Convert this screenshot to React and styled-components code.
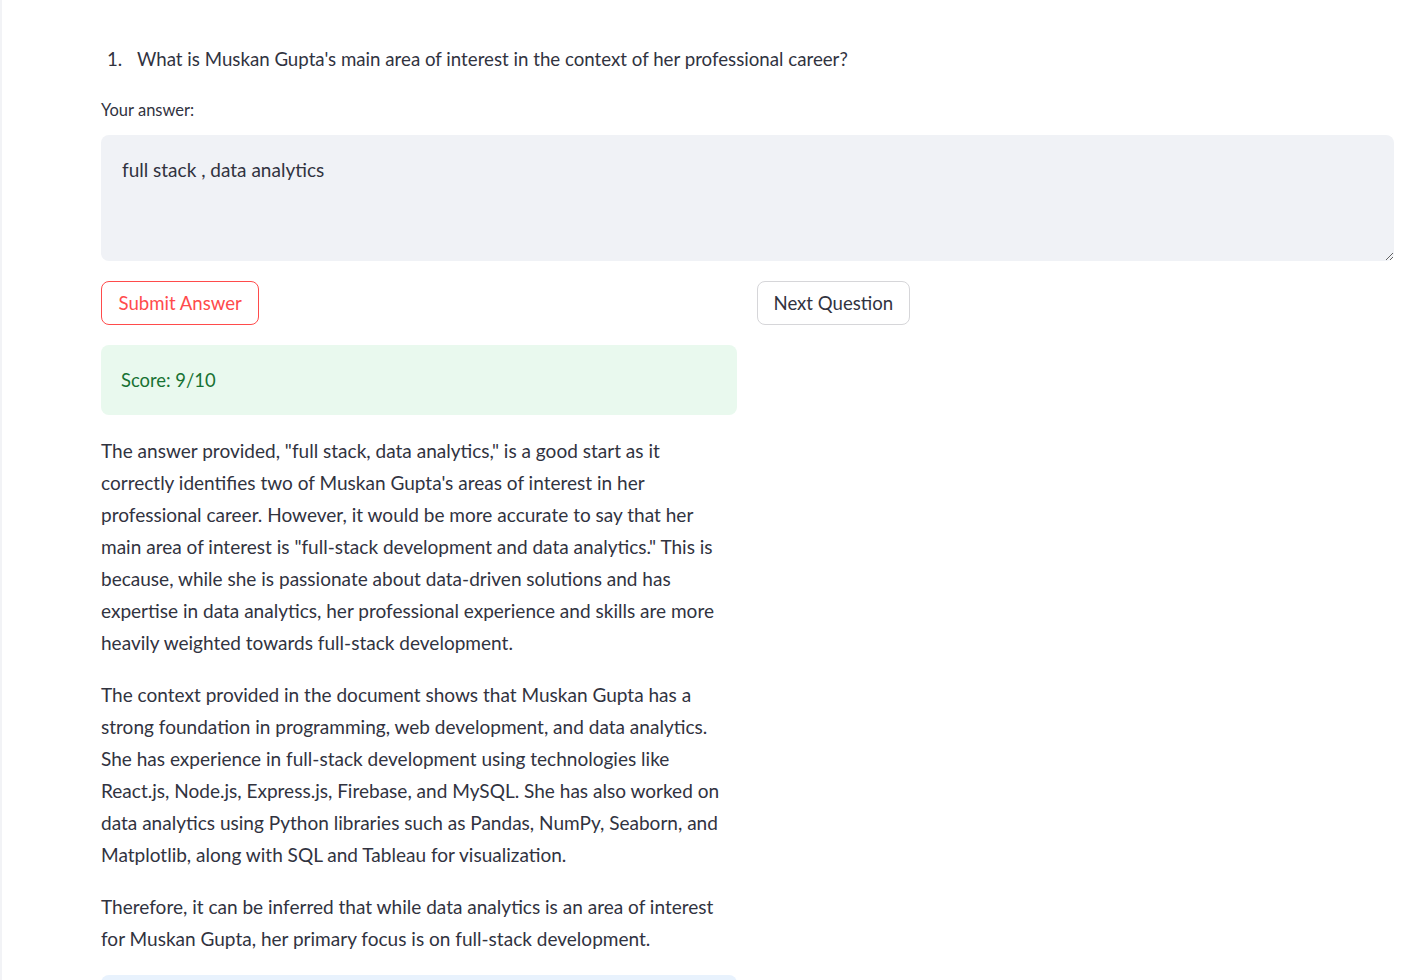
import React from 'react';
import styled, { createGlobalStyle } from 'styled-components';

const GlobalStyle = createGlobalStyle`
  html, body {
    margin: 0;
    padding: 0;
    background: #ffffff;
  }

  body {
    font-family: Lato, "Noto Sans", sans-serif;
    color: #31333f;
    -webkit-font-smoothing: antialiased;
  }
`;

const StyledPage = styled.div`
  min-height: 980px;
  border-left: 2px solid #f2f3f6;
  box-sizing: border-box;
`;

const StyledMain = styled.main`
  width: 1293px;
  padding: 43px 0 0 99px;
  display: flex;
  flex-direction: column;
`;

const StyledQuestionList = styled.ol`
  margin: 0;
  padding: 0 0 0 6px;
  list-style: none;
  font-size: 18.7px;
  line-height: 32px;
`;

const StyledQuestion = styled.li`
  display: flex;

  &::before {
    content: '${({ number }) => number}.';
    flex: 0 0 30px;
  }
`;

const StyledLabel = styled.label`
  display: block;
  margin: 24px 0 14px;
  font-size: 16.5px;
  line-height: 22px;
`;

const StyledTextArea = styled.textarea`
  display: block;
  box-sizing: border-box;
  width: 100%;
  height: 126px;
  margin: 0;
  padding: 19px 21px;
  border: none;
  border-radius: 8px;
  background: #f0f2f6;
  color: #31333f;
  font-family: inherit;
  font-size: 19px;
  line-height: 32px;
  resize: vertical;
  outline: none;
`;

const StyledColumns = styled.div`
  display: grid;
  grid-template-columns: 636px 1fr;
  column-gap: 20px;
  margin-top: 20px;
  align-items: start;
`;

const StyledColumn = styled.div`
  display: flex;
  flex-direction: column;
  gap: 20px;
`;

const StyledButton = styled.button`
  align-self: flex-start;
  height: 44px;
  padding: 0 ${({ $primary }) => ($primary ? '16.5px' : '15.5px')};
  border: 1px solid ${({ $primary }) => ($primary ? '#ff4b4b' : '#d6d6d9')};
  border-radius: 8px;
  background: #ffffff;
  color: ${({ $primary }) => ($primary ? '#ff4b4b' : '#31333f')};
  font-family: inherit;
  font-size: 18.6px;
  cursor: pointer;
`;

const StyledAlert = styled.div`
  box-sizing: border-box;
  min-height: 70px;
  padding: 19px 20px;
  border-radius: 8px;
  background: ${({ kind }) => (kind === 'info' ? '#e8f2fd' : '#e9f9ee')};
  color: ${({ kind }) => (kind === 'info' ? '#004280' : '#177233')};
  font-size: 18.4px;
  line-height: 32px;
`;

const StyledFeedback = styled.div`
  display: flex;
  flex-direction: column;
  gap: 20px;

  p {
    margin: 0;
    font-size: 19.05px;
    line-height: 32px;
  }
`;

const feedback = [
  'The answer provided, "full stack, data analytics," is a good start as it correctly identifies two of Muskan Gupta\'s areas of interest in her professional career. However, it would be more accurate to say that her main area of interest is "full-stack development and data analytics." This is because, while she is passionate about data-driven solutions and has expertise in data analytics, her professional experience and skills are more heavily weighted towards full-stack development.',
  'The context provided in the document shows that Muskan Gupta has a strong foundation in programming, web development, and data analytics. She has experience in full-stack development using technologies like React.js, Node.js, Express.js, Firebase, and MySQL. She has also worked on data analytics using Python libraries such as Pandas, NumPy, Seaborn, and Matplotlib, along with SQL and Tableau for visualization.',
  'Therefore, it can be inferred that while data analytics is an area of interest for Muskan Gupta, her primary focus is on full-stack development.',
];

const App = () => (
  <StyledPage>
    <GlobalStyle />
    <StyledMain>
      <StyledQuestionList>
        <StyledQuestion number={1}>
          What is Muskan Gupta's main area of interest in the context of her professional career?
        </StyledQuestion>
      </StyledQuestionList>
      <StyledLabel htmlFor="answer">Your answer:</StyledLabel>
      <StyledTextArea id="answer" defaultValue="full stack , data analytics" />
      <StyledColumns>
        <StyledColumn>
          <StyledButton $primary>Submit Answer</StyledButton>
          <StyledAlert>Score: 9/10</StyledAlert>
          <StyledFeedback>
            {feedback.map(text => (
              <p key={text.slice(0, 20)}>{text}</p>
            ))}
          </StyledFeedback>
          <StyledAlert kind="info" />
        </StyledColumn>
        <StyledColumn>
          <StyledButton>Next Question</StyledButton>
        </StyledColumn>
      </StyledColumns>
    </StyledMain>
  </StyledPage>
);

export default App;
